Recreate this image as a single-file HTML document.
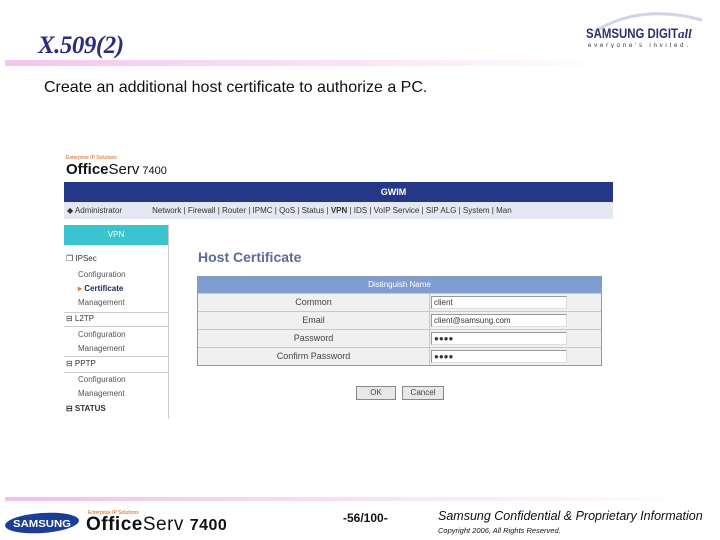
<!DOCTYPE html>
<html><head><meta charset="utf-8"><style>
*{margin:0;padding:0;box-sizing:border-box}
body{width:720px;height:540px;background:#fff;position:relative;overflow:hidden;font-family:"Liberation Sans",sans-serif}
.a{position:absolute;white-space:nowrap}
.side{font-size:8px;color:#555}
.row{position:absolute;left:198px;width:403px;height:18px;background:#f0f0f0;border-top:1px solid #c8c8c8}
.row .l{position:absolute;left:0;width:232px;text-align:center;font-size:9px;color:#444;line-height:17px;border-right:1px solid #c8c8c8;height:17px}
.row .in{position:absolute;left:233px;top:2px;width:136px;height:13px;background:#fff;border:1px solid #999;border-right-color:#ddd;border-bottom-color:#ddd;font-size:8px;line-height:11px;padding-left:2px;color:#333}
.btn{position:absolute;top:386px;height:14px;background:#e8e8e8;border:1px solid #888;font-size:8px;text-align:center;line-height:12px;color:#444}
</style></head><body>
<div class="a" style="left:38px;top:32px;font:italic bold 25px 'Liberation Serif',serif;color:#2c2c7c;letter-spacing:-0.5px">X.509(2)</div>
<div class="a" style="left:5px;top:60px;width:600px;height:6px;background:linear-gradient(90deg,#f4c6ec,#fbe4f7 60%,#fff)"></div>
<div class="a" style="left:44px;top:79px;font-size:16px;color:#111">Create an additional host certificate to authorize a PC.</div>
<svg class="a" style="left:580px;top:8px" width="130" height="40"><path d="M14 24 Q60 -5 122 12" stroke="#d0d4e4" stroke-width="3" fill="none"/><text x="6" y="30" font-family="Liberation Sans" font-weight="bold" font-size="14" fill="#2a3270" textLength="92" lengthAdjust="spacingAndGlyphs">SAMSUNG DIGIT</text><text x="98" y="30" font-family="Liberation Serif" font-style="italic" font-weight="bold" font-size="13" fill="#2a3270">all</text><text x="8" y="39" font-family="Liberation Sans" font-size="6" fill="#333" textLength="100" lengthAdjust="spacing">everyone's invited.</text></svg>

<div class="a" style="left:66px;top:155px;font-size:5px;color:#d0601a">Enterprise IP Solutions</div>
<div class="a" style="left:66px;top:161px;font-size:15px;color:#111"><b>Office</b>Serv<span style="font-size:11px"> 7400</span></div>
<div class="a" style="left:64px;top:182px;width:549px;height:20px;background:#243887;color:#fff;font-size:9px;font-weight:bold;text-align:center;line-height:20px;padding-left:110px">GWIM</div>
<div class="a" style="left:64px;top:202px;width:549px;height:17px;background:#e4e8f2;font-size:8px;line-height:17px;color:#333;padding-left:3px">◆ Administrator<span style="margin-left:30px">Network | Firewall | Router | IPMC | QoS | Status | <b>VPN</b> | IDS | VoIP Service | SIP ALG | System | Man</span></div>
<div class="a" style="left:64px;top:225px;width:104px;height:20px;background:#3cc3d0;color:#fff;font-size:8px;text-align:center;line-height:20px">VPN</div>
<div class="a" style="left:168px;top:225px;width:1px;height:194px;background:#ccc"></div>
<div class="a side" style="left:66px;top:254px;color:#333">❐ IPSec</div>
<div class="a side" style="left:78px;top:270px">Configuration</div>
<div class="a side" style="left:78px;top:284px;color:#1a2a5a;font-weight:bold"><span style="color:#d08020">▸</span> Certificate</div>
<div class="a side" style="left:78px;top:298px">Management</div>
<div class="a" style="left:64px;top:312px;width:104px;height:1px;background:#ccc"></div>
<div class="a side" style="left:66px;top:314px;color:#333">⊟ L2TP</div>
<div class="a" style="left:64px;top:326px;width:104px;height:1px;background:#ccc"></div>
<div class="a side" style="left:78px;top:330px">Configuration</div>
<div class="a side" style="left:78px;top:344px">Management</div>
<div class="a" style="left:64px;top:356px;width:104px;height:1px;background:#ccc"></div>
<div class="a side" style="left:66px;top:359px;color:#333">⊟ PPTP</div>
<div class="a" style="left:64px;top:372px;width:104px;height:1px;background:#ccc"></div>
<div class="a side" style="left:78px;top:375px">Configuration</div>
<div class="a side" style="left:78px;top:389px">Management</div>
<div class="a side" style="left:66px;top:404px;color:#333;font-weight:bold">⊟ STATUS</div>

<div class="a" style="left:198px;top:249px;font-size:14px;font-weight:bold;color:#5a6c9c">Host Certificate</div>
<div class="a" style="left:197px;top:276px;width:405px;height:90px;border:1px solid #8a9ab0"></div>
<div class="a" style="left:198px;top:277px;width:403px;height:16px;background:#7f9dd0;color:#fff;font-size:8px;text-align:center;line-height:16px">Distinguish Name</div>
<div class="row" style="top:293px"><div class="l">Common</div><div class="in">client</div></div>
<div class="row" style="top:311px"><div class="l">Email</div><div class="in">client@samsung.com</div></div>
<div class="row" style="top:329px"><div class="l">Password</div><div class="in">●●●●</div></div>
<div class="row" style="top:347px"><div class="l">Confirm Password</div><div class="in">●●●●</div></div>
<div class="btn" style="left:356px;width:40px">OK</div>
<div class="btn" style="left:402px;width:42px">Cancel</div>

<div class="a" style="left:5px;top:497px;width:700px;height:4px;background:linear-gradient(90deg,#f0c0ea,#fbe6f8 60%,#fff)"></div>
<svg class="a" style="left:4px;top:511px" width="76" height="24"><ellipse cx="38" cy="12" rx="37" ry="10" fill="#1b3d96" transform="rotate(-4 38 12)"/><text x="38" y="16" text-anchor="middle" font-family="Liberation Sans" font-weight="bold" font-size="10" fill="#fff" textLength="58" lengthAdjust="spacingAndGlyphs">SAMSUNG</text></svg>
<div class="a" style="left:88px;top:510px;font-size:5px;color:#d0601a">Enterprise IP Solutions</div>
<div class="a" style="left:86px;top:514px;font-size:19px;color:#111;letter-spacing:0.5px"><b>Office</b>Serv <b style="font-size:16px">7400</b></div>
<div class="a" style="left:343px;top:511px;font-size:12px;font-weight:bold;color:#111">-56/100-</div>
<div class="a" style="left:438px;top:509px;font-size:12.5px;font-style:italic;color:#111">Samsung Confidential &amp; Proprietary Information</div>
<div class="a" style="left:438px;top:526px;font-size:7.5px;font-style:italic;color:#111">Copyright 2006, All Rights Reserved.</div>
</body></html>
